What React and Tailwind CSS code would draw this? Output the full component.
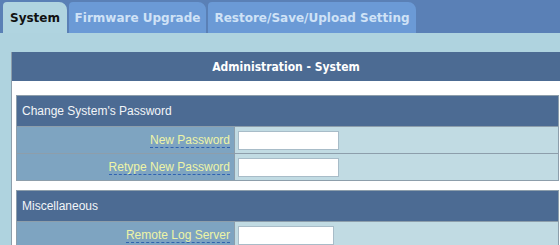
import React from "react";

function Row({ label, inputW = "w-[101px]" }) {
  return (
    <div className="flex h-[27px] border-t border-[#8d9eab]">
      <div className="w-[217px] bg-[#7ea4c1] flex items-center justify-end pr-[4px]">
        <span className="text-[12px] leading-[14px] text-[#eef4a6] border-b border-dashed border-[#2f62b0]">{label}</span>
      </div>
      <div className="flex-1 bg-[#c1dbe3] border-l border-[#8d9eab] flex items-center pl-[3px]">
        <div className={`${inputW} h-[19px] bg-white border border-[#a8bcc8]`}></div>
      </div>
    </div>
  );
}

function Section({ title, children }) {
  return (
    <div className="border border-[#8d9eab] border-b-0">
      <div className="h-[30px] bg-[#4c6b93] flex items-center pl-[5px] text-[12px] text-[#f2f5f8]">{title}</div>
      {children}
    </div>
  );
}

export default function App() {
  return (
    <div className="w-[560px] h-[245px] overflow-hidden bg-[#afd3df]" style={{ fontFamily: '"Liberation Sans", Arial, sans-serif' }}>
      <div className="h-[33px] bg-[#5a80b6] flex items-end pl-[3px] gap-[2px]" style={{ fontFamily: '"DejaVu Sans", Verdana, sans-serif' }}>
        <div className="h-[31px] px-[7px] w-[64px] bg-[#b0d4e0] rounded-tl-[4px] rounded-tr-[8px] flex items-center justify-center text-[12px] font-bold text-[#111]">System</div>
        <div className="h-[31px] w-[137px] bg-[#6b9ad6] rounded-tl-[4px] rounded-tr-[8px] flex items-center justify-center text-[12px] font-bold text-[#cfe2f6]">Firmware Upgrade</div>
        <div className="h-[31px] w-[208px] bg-[#6b9ad6] rounded-tl-[4px] rounded-tr-[8px] flex items-center justify-center text-[12px] font-bold text-[#cfe2f6]">Restore/Save/Upload Setting</div>
      </div>
      <div className="pl-[11px] pt-[19px]">
        <div className="bg-white border-l border-[#8d9eab]">
          <div className="h-[29px] bg-[#4c6b93] flex items-center justify-center text-[12px] font-bold text-white" style={{ fontFamily: '"DejaVu Sans Condensed", "DejaVu Sans", sans-serif' }}>Administration - System</div>
          <div className="pl-[4px] pr-[1px] pt-[14px]">
            <Section title="Change System's Password">
              <Row label="New Password" />
              <Row label="Retype New Password" />
            </Section>
            <div className="h-[10px] border-t border-[#8d9eab]"></div>
            <Section title="Miscellaneous">
              <Row label="Remote Log Server" inputW="w-[96px]" />
            </Section>
          </div>
        </div>
      </div>
    </div>
  );
}
